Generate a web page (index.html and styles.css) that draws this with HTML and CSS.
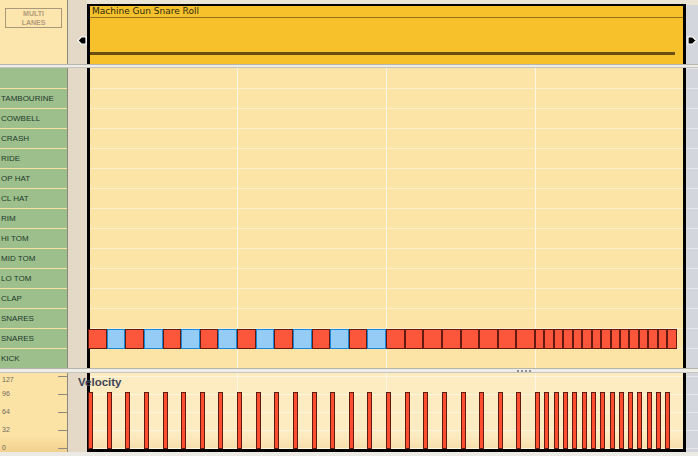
FILE: index.html
```html
<!DOCTYPE html>
<html>
<head>
<meta charset="utf-8">
<link rel="stylesheet" href="styles.css">
</head>
<body>
<div class="app">
  <div class="row header">
    <div class="col-labels"><div class="multi">MULTI<br>LANES</div></div>
    <div class="col-gutter">
      <svg class="arrow" width="10" height="9" viewBox="0 0 10 9"><polygon points="0.8,4.5 4.5,0.8 9,0.8 9,8.2 4.5,8.2" fill="#000" stroke="#fff" stroke-width="1.2"/></svg>
    </div>
    <div class="col-main">
      <div class="clip">
        <div class="clip-title">Machine Gun Snare Roll</div>
        <div class="clip-bar"></div>
      </div>
    </div>
    <div class="col-right">
      <svg class="arrow" width="10" height="9" viewBox="0 0 10 9"><polygon points="9.2,4.5 5.5,0.8 1,0.8 1,8.2 5.5,8.2" fill="#000" stroke="#fff" stroke-width="1.2"/></svg>
    </div>
  </div>

  <div class="sep"></div>

  <div class="row lanes">
    <div class="col-labels">
      <div class="lbl first"></div>
      <div class="lbl">TAMBOURINE</div>
      <div class="lbl">COWBELL</div>
      <div class="lbl">CRASH</div>
      <div class="lbl">RIDE</div>
      <div class="lbl">OP HAT</div>
      <div class="lbl">CL HAT</div>
      <div class="lbl">RIM</div>
      <div class="lbl">HI TOM</div>
      <div class="lbl">MID TOM</div>
      <div class="lbl">LO TOM</div>
      <div class="lbl">CLAP</div>
      <div class="lbl">SNARES</div>
      <div class="lbl">SNARES</div>
      <div class="lbl">KICK</div>
    </div>
    <div class="col-gutter"></div>
    <div class="col-main lanes-main">
      <div class="lane first"></div>
      <div class="lane"></div>
      <div class="lane"></div>
      <div class="lane"></div>
      <div class="lane"></div>
      <div class="lane"></div>
      <div class="lane"></div>
      <div class="lane"></div>
      <div class="lane"></div>
      <div class="lane"></div>
      <div class="lane"></div>
      <div class="lane"></div>
      <div class="lane"></div>
      <div class="lane">
        <div class="track">
          <div class="bar">
            <div class="note"></div><div class="note b"></div><div class="note"></div><div class="note b"></div>
            <div class="note"></div><div class="note b"></div><div class="note"></div><div class="note b"></div>
          </div>
          <div class="bar">
            <div class="note"></div><div class="note b"></div><div class="note"></div><div class="note b"></div>
            <div class="note"></div><div class="note b"></div><div class="note"></div><div class="note b"></div>
          </div>
          <div class="bar">
            <div class="note"></div><div class="note"></div><div class="note"></div><div class="note"></div>
            <div class="note"></div><div class="note"></div><div class="note"></div><div class="note"></div>
          </div>
          <div class="bar">
            <div class="note"></div><div class="note"></div><div class="note"></div><div class="note"></div>
            <div class="note"></div><div class="note"></div><div class="note"></div><div class="note"></div>
            <div class="note"></div><div class="note"></div><div class="note"></div><div class="note"></div>
            <div class="note"></div><div class="note"></div><div class="note"></div><div class="slot"></div>
          </div>
        </div>
      </div>
      <div class="lane"></div>
    </div>
    <div class="col-right stripes"></div>
  </div>

  <div class="sep sep2"><i></i><i></i><i></i><i></i></div>

  <div class="row velo">
    <div class="col-labels vlabels">
      <div class="tick top"><span>127</span></div>
      <div class="tick"><span>96</span></div>
      <div class="tick"><span>64</span></div>
      <div class="tick"><span>32</span></div>
      <div class="tick last"><span>0</span></div>
    </div>
    <div class="col-gutter"></div>
    <div class="col-main velo-main">
      <div class="vtrack">
        <div class="vgroup">
          <div class="vslot"><div class="vbar"></div></div><div class="vslot"><div class="vbar"></div></div>
          <div class="vslot"><div class="vbar"></div></div><div class="vslot"><div class="vbar"></div></div>
          <div class="vslot"><div class="vbar"></div></div><div class="vslot"><div class="vbar"></div></div>
          <div class="vslot"><div class="vbar"></div></div><div class="vslot"><div class="vbar"></div></div>
        </div>
        <div class="vgroup">
          <div class="vslot"><div class="vbar"></div></div><div class="vslot"><div class="vbar"></div></div>
          <div class="vslot"><div class="vbar"></div></div><div class="vslot"><div class="vbar"></div></div>
          <div class="vslot"><div class="vbar"></div></div><div class="vslot"><div class="vbar"></div></div>
          <div class="vslot"><div class="vbar"></div></div><div class="vslot"><div class="vbar"></div></div>
        </div>
        <div class="vgroup">
          <div class="vslot"><div class="vbar"></div></div><div class="vslot"><div class="vbar"></div></div>
          <div class="vslot"><div class="vbar"></div></div><div class="vslot"><div class="vbar"></div></div>
          <div class="vslot"><div class="vbar"></div></div><div class="vslot"><div class="vbar"></div></div>
          <div class="vslot"><div class="vbar"></div></div><div class="vslot"><div class="vbar"></div></div>
        </div>
        <div class="vgroup">
          <div class="vslot"><div class="vbar"></div></div><div class="vslot"><div class="vbar"></div></div>
          <div class="vslot"><div class="vbar"></div></div><div class="vslot"><div class="vbar"></div></div>
          <div class="vslot"><div class="vbar"></div></div><div class="vslot"><div class="vbar"></div></div>
          <div class="vslot"><div class="vbar"></div></div><div class="vslot"><div class="vbar"></div></div>
          <div class="vslot"><div class="vbar"></div></div><div class="vslot"><div class="vbar"></div></div>
          <div class="vslot"><div class="vbar"></div></div><div class="vslot"><div class="vbar"></div></div>
          <div class="vslot"><div class="vbar"></div></div><div class="vslot"><div class="vbar"></div></div>
          <div class="vslot"><div class="vbar"></div></div><div class="vslot"></div>
        </div>
      </div>
    </div>
    <div class="col-right vstripes"></div>
    <div class="velo-title">Velocity</div>
  </div>

  <div class="bottom"></div>
</div>
</body>
</html>
```

FILE: styles.css
```css
* { box-sizing: border-box; margin: 0; padding: 0; }
html, body { width: 698px; height: 456px; overflow: hidden; }
body { background: #ebeae4; font-family: "Liberation Sans", Arial, sans-serif; }

.app { display: flex; flex-direction: column; width: 698px; height: 456px; }
.row { display: flex; flex: none; }
.header { height: 64px; }
.lanes { height: 300px; }
.velo { height: 79px; position: relative; }

.col-labels { width: 68px; flex: none; border-right: 1px solid #8e887a; }
.col-gutter { width: 19px; flex: none; background: #e3d9c6; }
.col-main { width: 599px; flex: none; }
.col-right { width: 12px; flex: none; background: #d3d7dd; }

/* header */
.header .col-labels { background: #fde6ad; padding: 8px 0 0 5px; }
.multi {
  width: 57px; height: 20px;
  border: 1px solid #a8987c;
  color: #b39a7a;
  font-size: 7px; font-weight: bold; line-height: 9px;
  text-align: center;
}
.arrow { display: block; }
.header .col-gutter { padding: 36px 0 0 9px; }
.header .col-main { padding-top: 4px; background: #ebe5d6; }
.clip {
  height: 60px;
  background: #f6c12b;
  border-top: 2px solid #000;
  border-left: 3px solid #000;
  border-right: 3px solid #000;
}
.clip-title {
  height: 12px;
  padding-left: 2px;
  border-bottom: 1px solid #94701c;
  font-family: "DejaVu Sans", sans-serif;
  font-size: 9px; line-height: 10px;
  color: #2b2a14;
  white-space: nowrap;
}
.clip-bar { margin-top: 34px; width: 585px; height: 3px; background: #6b4e12; }
.header .col-right {
  background: linear-gradient(#ebe5d6 0 5px, #d3d7dd 5px);
  padding: 36px 0 0 1px;
}

/* separators */
.sep {
  flex: none;
  height: 4px;
  background: #eeede7;
  border-top: 1px solid #b5b5ad;
  border-bottom: 1px solid #c5c5bd;
}
.sep2 { height: 5px; display: flex; align-items: center; gap: 2px; padding-left: 517px; }
.sep2 i { display: block; width: 2px; height: 2px; background: #8f8f8f; }

/* lanes */
.lanes .col-labels { background: #9dbf8b; display: flex; flex-direction: column; }
.lbl {
  height: 20px; flex: none;
  border-top: 1px solid #f6e4a5;
  padding-left: 1px;
  font-size: 8px; line-height: 19px;
  color: #1d3a2c;
  white-space: nowrap;
}
.lbl.first { border-top: 0; }

.lanes-main {
  display: flex; flex-direction: column;
  border-left: 3px solid #000;
  border-right: 3px solid #000;
  background-color: #fce3a6;
  background-image: linear-gradient(to right, #fff7e6 0 1px, transparent 1px);
  background-size: 149px 100%;
  background-position: -2px 0;
}
.lane { height: 20px; flex: none; border-top: 1px solid #fdefcb; }
.lane.first { border-top: 0; }

.track { position: relative; z-index: 1; display: flex; width: 596px; height: 20px; margin-left: -2px; }
.bar { flex: 1; display: flex; }
.note { flex: 1; height: 20px; background: #fd573b; border: 1px solid #641a10; }
.note.b { background: #94ccf6; border-color: #1888dc; }
.slot { flex: 1; }

.stripes {
  background-color: #d3d7dd;
  background-image: linear-gradient(#e6e8ec 0 1px, transparent 1px);
  background-size: 100% 20px;
}

/* velocity */
.vlabels {
  background: linear-gradient(#fbe3a5 80%, #f3d08e);
  padding-top: 3px;
  display: flex; flex-direction: column;
}
.tick {
  height: 18px; flex: none;
  display: flex; justify-content: space-between; align-items: flex-start;
  padding-left: 2px;
}
.tick::after { content: ""; display: block; width: 9px; height: 1px; background: #8c8a80; }
.tick span {
  margin-top: -4px;
  font-size: 7px; line-height: 8px;
  color: #6f6a5e;
}
.tick.top span { margin-top: 0; }
.tick.last { height: 4px; }

.velo-main {
  border-left: 3px solid #000;
  border-right: 3px solid #000;
  border-bottom: 3px solid #000;
  background-color: #fdebc1;
  background-image:
    linear-gradient(to right, #fff7e6 0 1px, transparent 1px),
    linear-gradient(#fff6df 0 1px, transparent 1px),
    linear-gradient(transparent 82%, rgba(215, 160, 70, 0.18));
  background-size: 149px 100%, 100% 18px, 100% 100%;
  background-position: -2px 0, 0 3px, 0 0;
}
.vtrack { position: relative; z-index: 1; display: flex; width: 596px; height: 76px; margin-left: -2px; }
.vgroup { flex: 1; display: flex; }
.vslot { flex: 1; display: flex; align-items: flex-end; }
.vbar { width: 5px; height: 57px; background: #fc4e30; border: 1px solid #5e1a0e; }

.vstripes {
  background-color: #d3d7dd;
  background-image: linear-gradient(#e6e8ec 0 1px, transparent 1px);
  background-size: 100% 18px;
  background-position: 0 3px;
}

.velo-title {
  position: absolute; left: 78px; top: 3px; z-index: 2;
  font-size: 11.5px; font-weight: bold; line-height: 12px;
  color: #3c4458;
}

.bottom { flex: none; height: 4px; background: #ebeae4; }
```
